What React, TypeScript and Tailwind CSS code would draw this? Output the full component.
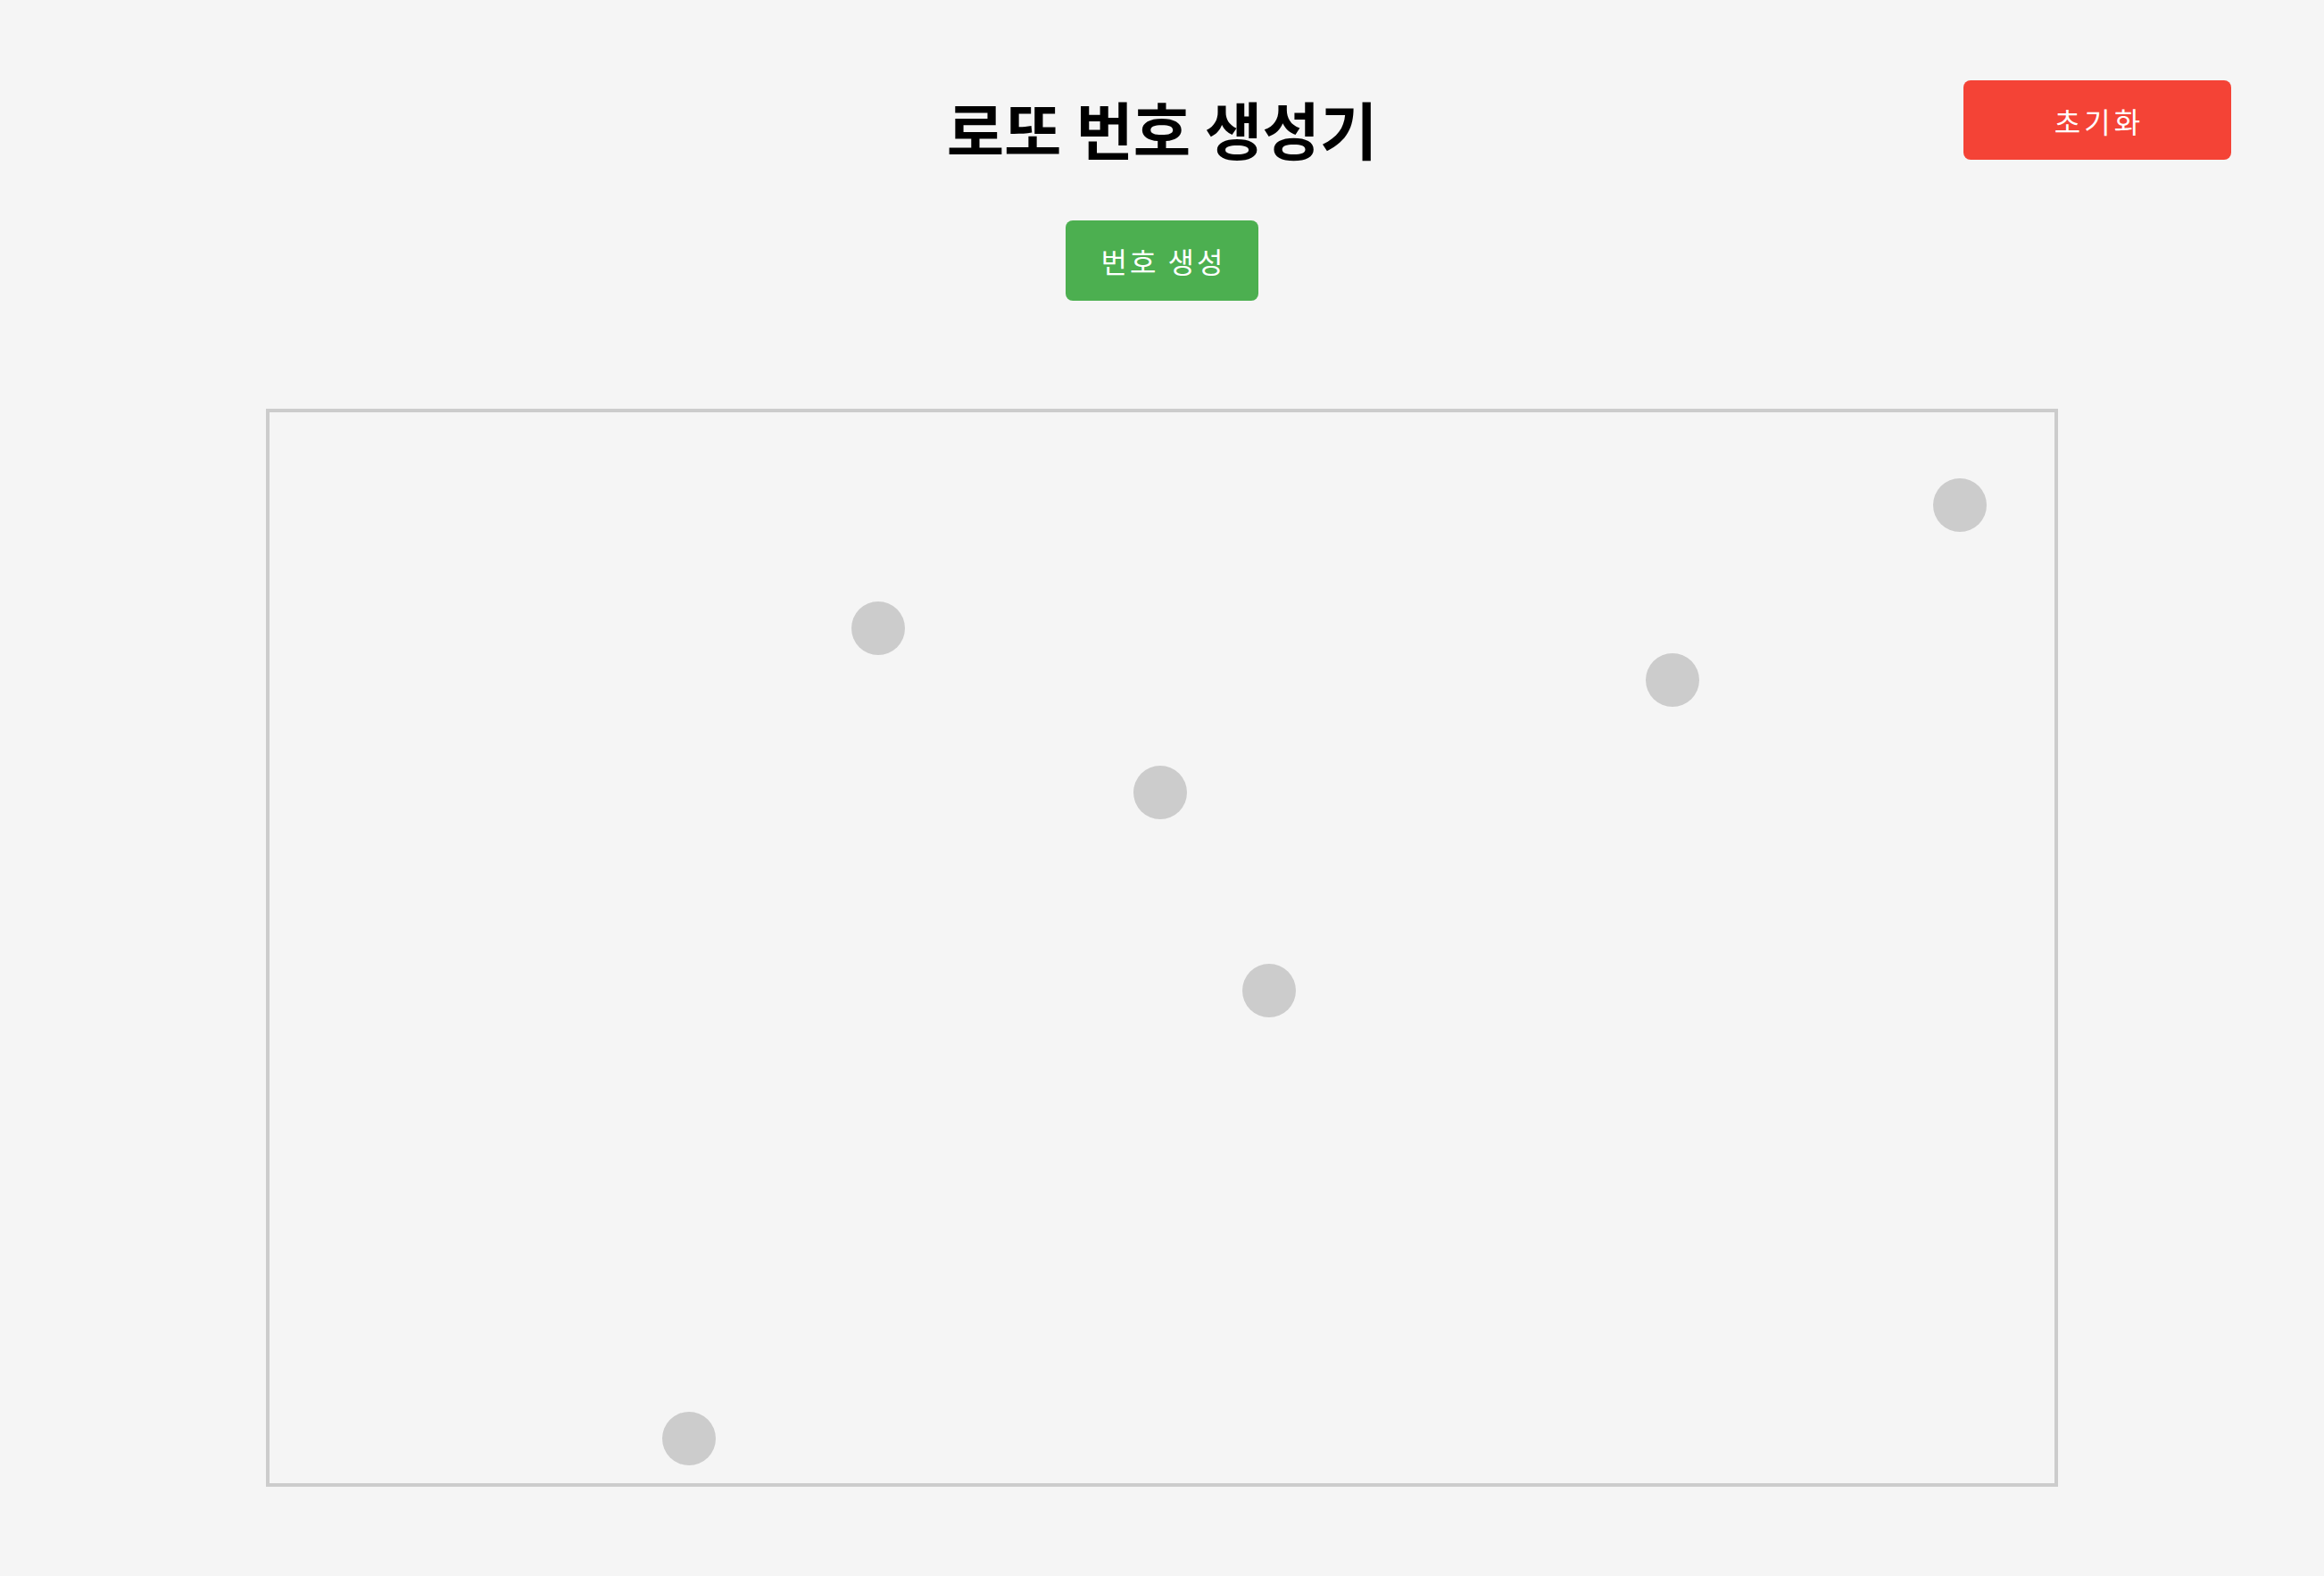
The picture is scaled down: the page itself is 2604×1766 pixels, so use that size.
import React from "react";

const balls = [
  { left: 652, top: 212 },
  { left: 1864, top: 74 },
  { left: 1542, top: 270 },
  { left: 968, top: 396 },
  { left: 1090, top: 618 },
  { left: 440, top: 1120 },
];

export default function App() {
  return (
    <div className="relative min-h-screen bg-[#f5f5f5] font-['Noto_Sans_CJK_KR','Noto_Sans',sans-serif]">
      <button className="absolute top-[90px] right-[104px] w-[300px] h-[89px] rounded-[8px] bg-[#f44336] text-white text-[32px] tracking-[4px] pl-[4px] flex items-center justify-center">
        초기화
      </button>
      <div className="flex flex-col items-center">
        <h1 className="mt-[98px] text-[70px] font-bold leading-[92px] text-black">로또 번호 생성기</h1>
        <button className="mt-[57px] w-[216px] h-[90px] rounded-[8px] bg-[#4caf50] text-white text-[32px] tracking-[3px] pl-[3px] flex items-center justify-center">
          번호 생성
        </button>
        <div className="relative mt-[121px] w-[2008px] h-[1208px] border-4 border-[#cccccc]">
          {balls.map((b, i) => (
            <div
              key={i}
              className="absolute w-[60px] h-[60px] rounded-full bg-[#cccccc]"
              style={{ left: b.left, top: b.top }}
            />
          ))}
        </div>
      </div>
    </div>
  );
}
